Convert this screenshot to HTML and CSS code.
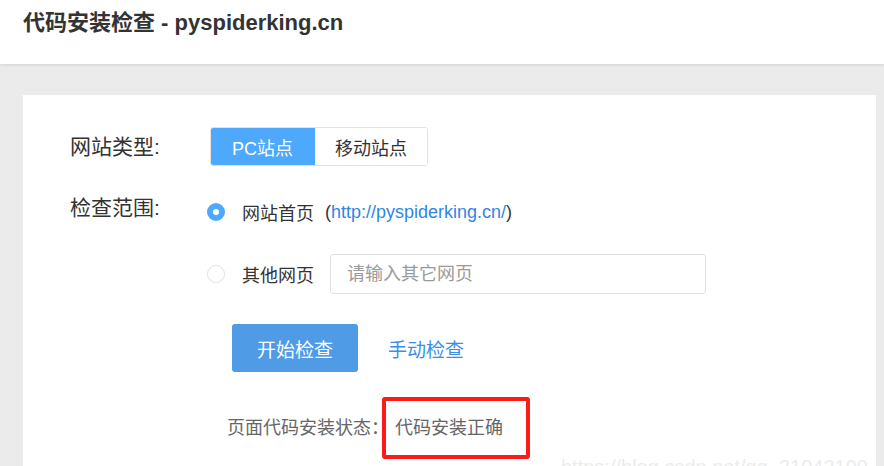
FILE: index.html
```html
<!DOCTYPE html>
<html lang="zh-CN">
<head>
<meta charset="utf-8">
<title>代码安装检查 - pyspiderking.cn</title>
<link rel="stylesheet" href="styles.css">
</head>
<body>
<header class="topbar">
  <h1 class="title">代码安装检查 - pyspiderking.cn</h1>
</header>
<main class="band">
  <section class="card">
    <div class="row">
      <div class="label">网站类型:</div>
      <div class="seg">
        <span class="seg-item active">PC站点</span>
        <span class="seg-item">移动站点</span>
      </div>
    </div>
    <div class="row row-scope">
      <div class="label label-top">检查范围:</div>
      <div class="options">
        <div class="opt">
          <span class="radio checked"></span>
          <span class="opt-text">网站首页</span>
          <span class="paren">(<a class="url">http://pyspiderking.cn/</a>)</span>
        </div>
        <div class="opt">
          <span class="radio"></span>
          <span class="opt-text">其他网页</span>
          <input class="field" type="text" placeholder="请输入其它网页">
        </div>
      </div>
    </div>
    <div class="actions">
      <button class="btn">开始检查</button>
      <a class="manual">手动检查</a>
    </div>
    <div class="status">
      <span class="status-label">页面代码安装状态：</span>
      <span class="status-value">代码安装正确</span>
    </div>
  </section>
  <div class="watermark">https://blog.csdn.net/qq_31042199</div>
</main>
</body>
</html>
```
FILE: styles.css
```css
html, body {
  margin: 0;
  padding: 0;
  background: #fff;
  overflow: hidden;
  height: 466px;
}
body {
  font-family: "Liberation Sans", "Noto Sans CJK SC", sans-serif;
  color: #333;
  position: relative;
}
.topbar {
  height: 64px;
  box-sizing: border-box;
  padding: 9px 0 0 23px;
  background: #fff;
  box-shadow: 0 1px 3px rgba(0,0,0,0.10);
  position: relative;
  z-index: 1;
}
.title {
  margin: 0;
  font-size: 22px;
  line-height: 28px;
  font-weight: bold;
  color: #333;
}
.band {
  background: #ebebeb;
  padding: 31px 8px 0 23px;
  height: 402px;
  box-sizing: border-box;
}
.card {
  background: #fff;
  height: 100%;
  box-sizing: border-box;
  padding: 32px 0 0 47px;
}
.row {
  display: flex;
  align-items: center;
}
.label {
  width: 140px;
  font-size: 21px;
  line-height: 39px;
  color: #333;
}
.label-top {
  line-height: 32px;
  align-self: flex-start;
}
.seg {
  display: flex;
  height: 39px;
  border-radius: 3px;
  overflow: hidden;
  border: 1px solid #e2e2e2;
  box-sizing: border-box;
}
.seg-item {
  display: flex;
  align-items: center;
  justify-content: center;
  font-size: 18px;
  color: #333;
  background: #fff;
}
.seg-item:first-child { width: 105px; }
.seg-item:last-child { width: 112px; }
.seg-item.active {
  background: #4ea8fb;
  color: #fff;
  margin: -1px 0 -1px -1px;
}
.row-scope {
  margin-top: 26px;
  align-items: flex-start;
}
.options {
  display: flex;
  flex-direction: column;
  gap: 22px;
  margin-left: -3px;
}
.opt {
  display: flex;
  align-items: center;
  height: 40px;
}
.radio {
  width: 18px;
  height: 18px;
  box-sizing: border-box;
  border-radius: 50%;
  border: 1.5px solid #e3e3e3;
  background: #fff;
  margin-right: 17px;
}
.radio.checked {
  border: 6px solid #4ea8fb;
}
.opt-text {
  font-size: 18px;
  color: #333;
}
.paren {
  font-size: 18px;
  color: #333;
  margin-left: 11px;
}
.url {
  color: #2f86e6;
}
.field {
  margin-left: 16px;
  width: 376px;
  height: 40px;
  box-sizing: border-box;
  border: 1px solid #e0e0e0;
  border-radius: 3px;
  padding: 0 0 0 16px;
  font-family: "Liberation Sans", "Noto Sans CJK SC", sans-serif;
  font-size: 18px;
  color: #333;
  outline: none;
}
.field::placeholder { color: #9a9a9a; }
.actions {
  display: flex;
  align-items: center;
  margin: 30px 0 0 162px;
  gap: 30px;
}
.btn {
  width: 126px;
  height: 48px;
  border: none;
  border-radius: 3px;
  background: #4f9be6;
  color: #fff;
  font-family: "Liberation Sans", "Noto Sans CJK SC", sans-serif;
  font-size: 19px;
  padding: 0;
}
.manual {
  color: #3a8ee6;
  font-size: 19px;
}
.status {
  display: flex;
  align-items: center;
  margin: 26px 0 0 157px;
  height: 60px;
  font-size: 18px;
  line-height: 24px;
  color: #666;
}
.status-value {
  position: relative;
  display: inline-block;
  margin-left: 6px;
}
.status-value::before {
  content: "";
  position: absolute;
  left: -13px;
  right: -27px;
  top: -19px;
  bottom: -19px;
  border: 4px solid #ff1a1a;
  border-radius: 3px;
}
.watermark {
  position: absolute;
  left: 561px;
  top: 457px;
  font-size: 20px;
  line-height: 20px;
  color: #ececec;
  white-space: nowrap;
}
```
